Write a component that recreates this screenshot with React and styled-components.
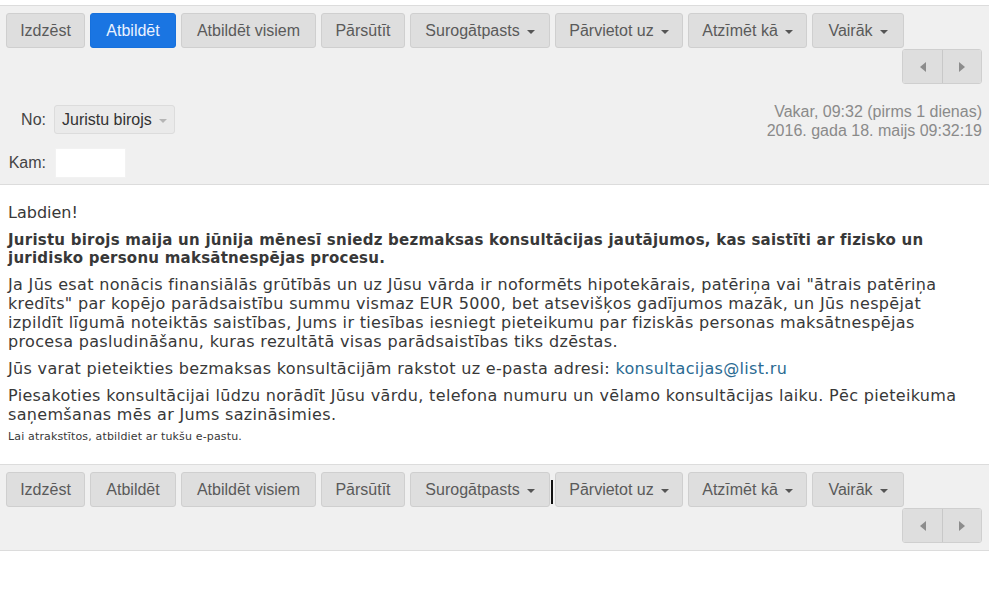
import React from "react";
import styled, { createGlobalStyle } from "styled-components";

const Global = createGlobalStyle`
  html, body { margin: 0; padding: 0; background: #fff; }
  body { font-family: "Liberation Sans", Arial, sans-serif; }
`;

const Page = styled.div`
  padding-top: 5px;
  width: 989px;
`;

const Bar = styled.div`
  background: #f0f0f0;
  border-top: 1px solid #dcdcdc;
  border-bottom: 1px solid #dcdcdc;
  padding: 7px 7px ${(p) => (p.$bottom ? 7 : 6)}px 6px;
`;

const ButtonRow = styled.div`
  display: flex;
  gap: 5px;
`;

const NavRow = styled.div`
  display: flex;
  justify-content: flex-end;
  margin-top: 1px;
`;

const Btn = styled.button`
  position: relative;
  box-sizing: border-box;
  width: ${(p) => p.$w}px;
  height: 35px;
  padding: 0;
  border: 1px solid ${(p) => (p.$primary ? "#1670dc" : "#cfcfcf")};
  border-radius: 3px;
  background: ${(p) => (p.$primary ? "#1a75e2" : "#dedede")};
  color: ${(p) => (p.$primary ? "#eaf2ff" : "#5a5a5a")};
  font-family: "Liberation Sans", Arial, sans-serif;
  font-size: 16px;
  display: flex;
  align-items: center;
  justify-content: center;
  white-space: nowrap;
  cursor: pointer;
  ${(p) =>
    p.$caretMark &&
    `&::after { content: ""; position: absolute; right: -4px; top: 7px; width: 2px; height: 24px; background: #111; }`}
`;

const Caret = styled.span`
  display: inline-block;
  margin-left: 7px;
  margin-top: 2px;
  border-left: 4px solid transparent;
  border-right: 4px solid transparent;
  border-top: 4px solid ${(p) => p.$color || "#555"};
`;

const NavGroup = styled.div`
  display: flex;
  border: 1px solid #cfcfcf;
  border-radius: 3px;
  overflow: hidden;
`;

const NavBtn = styled.button`
  width: 39px;
  height: 33px;
  border: none;
  background: #dedede;
  display: flex;
  align-items: center;
  justify-content: center;
  padding: 0;
  & + & { border-left: 1px solid #c8c8c8; }
`;

const InfoArea = styled.div`
  display: flex;
  justify-content: space-between;
  align-items: flex-start;
  margin-top: 18px;
`;

const Fields = styled.div`
  display: grid;
  grid-template-columns: 39px auto;
  column-gap: 8px;
  row-gap: 14px;
  align-items: center;
  padding-top: 3px;
  padding-left: 1px;
`;

const Label = styled.span`
  font-size: 16px;
  color: #444;
  text-align: right;
`;

const Select = styled.div`
  justify-self: start;
  height: 29px;
  box-sizing: border-box;
  border: 1px solid #dcdcdc;
  border-radius: 3px;
  background: #eaeaea;
  color: #333;
  font-size: 16px;
  display: flex;
  align-items: center;
  padding: 0 7px;
`;

const Input = styled.input`
  width: 71px;
  height: 30px;
  box-sizing: border-box;
  border: 1px solid #f2f2f2;
  background: #fff;
  margin-left: 1px;
`;

const DateBox = styled.div`
  text-align: right;
  color: #8a8a8a;
  font-size: 16px;
  line-height: 19px;
`;

const Message = styled.div`
  font-family: "DejaVu Sans", Verdana, sans-serif;
  color: #383838;
  padding: 18px 8px 20px 8px;
`;

const P = styled.p`
  margin: 0 0 ${(p) => (p.$mb !== undefined ? p.$mb : 8)}px 0;
  font-size: ${(p) => p.$size || 16}px;
  line-height: ${(p) => p.$lh || 19}px;
  font-weight: ${(p) => (p.$bold ? 700 : 400)};
  letter-spacing: ${(p) => (p.$ls !== undefined ? p.$ls : 0.33)}px;
`;

const Link = styled.a`
  color: #2b6a92;
  text-decoration: none;
`;

function Arrow({ dir }) {
  return (
    <svg width="6" height="10" viewBox="0 0 6 10">
      {dir === "left" ? (
        <polygon points="6,0 6,10 0,5" fill="#8c8c8c" />
      ) : (
        <polygon points="0,0 0,10 6,5" fill="#8c8c8c" />
      )}
    </svg>
  );
}

function Toolbar({ primary, caretMark }) {
  return (
    <>
      <ButtonRow>
        <Btn $w={79}>Izdzēst</Btn>
        <Btn $w={86} $primary={primary}>
          Atbildēt
        </Btn>
        <Btn $w={135}>Atbildēt visiem</Btn>
        <Btn $w={84}>Pārsūtīt</Btn>
        <Btn $w={140} $caretMark={caretMark}>
          Surogātpasts<Caret />
        </Btn>
        <Btn $w={128}>
          Pārvietot uz<Caret />
        </Btn>
        <Btn $w={119}>
          Atzīmēt kā<Caret />
        </Btn>
        <Btn $w={92}>
          Vairāk<Caret />
        </Btn>
      </ButtonRow>
      <NavRow>
        <NavGroup>
          <NavBtn>
            <Arrow dir="left" />
          </NavBtn>
          <NavBtn>
            <Arrow dir="right" />
          </NavBtn>
        </NavGroup>
      </NavRow>
    </>
  );
}

export default function App() {
  return (
    <Page>
      <Global />
      <Bar>
        <Toolbar primary />
        <InfoArea>
          <Fields>
            <Label>No:</Label>
            <Select>
              Juristu birojs
              <Caret $color="#b5b5b5" />
            </Select>
            <Label>Kam:</Label>
            <Input />
          </Fields>
          <DateBox>
            Vakar, 09:32 (pirms 1 dienas)
            <br />
            2016. gada 18. maijs 09:32:19
          </DateBox>
        </InfoArea>
      </Bar>
      <Message>
        <P $mb={9} $ls={0}>
          Labdien!
        </P>
        <P $bold $size={15} $lh={18} $mb={8} $ls={0.24}>
          Juristu birojs maija un jūnija mēnesī sniedz bezmaksas konsultācijas jautājumos, kas saistīti ar fizisko un
          juridisko personu maksātnespējas procesu.
        </P>
        <P>
          Ja Jūs esat nonācis finansiālās grūtībās un uz Jūsu vārda ir noformēts hipotekārais, patēriņa vai "ātrais
          patēriņa kredīts" par kopējo parādsaistību summu vismaz EUR 5000, bet atsevišķos gadījumos mazāk, un Jūs
          nespējat izpildīt līgumā noteiktās saistības, Jums ir tiesības iesniegt pieteikumu par fiziskās personas
          maksātnespējas procesa pasludināšanu, kuras rezultātā visas parādsaistības tiks dzēstas.
        </P>
        <P>
          Jūs varat pieteikties bezmaksas konsultācijām rakstot uz e-pasta adresi:{" "}
          <Link href="#">konsultacijas@list.ru</Link>
        </P>
        <P $mb={6}>
          Piesakoties konsultācijai lūdzu norādīt Jūsu vārdu, telefona numuru un vēlamo konsultācijas laiku. Pēc
          pieteikuma saņemšanas mēs ar Jums sazināsimies.
        </P>
        <P $size={11} $lh={14} $mb={0} $ls={0.15}>
          Lai atrakstītos, atbildiet ar tukšu e-pastu.
        </P>
      </Message>
      <Bar $bottom>
        <Toolbar caretMark />
      </Bar>
    </Page>
  );
}
